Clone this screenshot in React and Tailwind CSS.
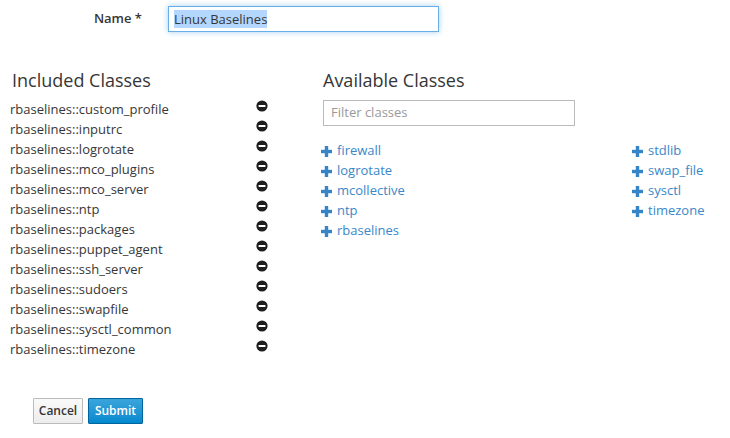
const included = [
  "custom_profile",
  "inputrc",
  "logrotate",
  "mco_plugins",
  "mco_server",
  "ntp",
  "packages",
  "puppet_agent",
  "ssh_server",
  "sudoers",
  "swapfile",
  "sysctl_common",
  "timezone",
];

const availableLeft = ["firewall", "logrotate", "mcollective", "ntp", "rbaselines"];
const availableRight = ["stdlib", "swap_file", "sysctl", "timezone"];

function MinusCircle() {
  return (
    <svg width="12" height="12" viewBox="0 0 12 12" className="mt-[-8px]">
      <circle cx="6" cy="6" r="5.6" fill="#1d1d1d" />
      <rect x="2.6" y="5" width="6.8" height="2" fill="#fff" />
    </svg>
  );
}

function Plus() {
  return (
    <svg width="11" height="11" viewBox="0 0 11 11">
      <rect x="3.8" y="0" width="3.4" height="11" fill="#3684c8" />
      <rect x="0" y="3.8" width="11" height="3.4" fill="#3684c8" />
    </svg>
  );
}

function ClassLink({ name }) {
  return (
    <div className="flex items-center h-5">
      <Plus />
      <span className="ml-[5px] text-[#3a87c9]">{name}</span>
    </div>
  );
}

export default function App() {
  return (
    <div
      className="w-[730px] h-[438px] bg-white text-[#363636] text-[13px] pl-[12px] overflow-hidden"
      style={{ fontFamily: '"Open Sans", sans-serif' }}
    >
      <div className="flex items-center pt-[6px]">
        <div className="w-[130px] text-right font-semibold">Name *</div>
        <div className="ml-[26px] w-[271px] h-[26px] border border-[#66afe9] shadow-[0_0_6px_rgba(102,175,233,0.6)] flex items-center px-[5px]">
          <span className="bg-[#b3d7fe] leading-[18px]">Linux Baselines</span>
        </div>
      </div>

      <div className="flex mt-[36px]">
        <div className="w-[311px]">
          <h2 className="text-[18px] leading-6">Included Classes</h2>
          <div className="mt-[8px] -ml-[2px]">
            {included.map((c) => (
              <div key={c} className="w-[258px] h-5 flex items-center justify-between">
                <span>rbaselines::{c}</span>
                <MinusCircle />
              </div>
            ))}
          </div>
          <div className="flex mt-[38px] ml-[21px] gap-[5px] text-[12px]">
            <button className="h-[26px] w-[50px] border border-[#bbb] rounded-[1px] bg-gradient-to-b from-[#fafafa] to-[#ededed] text-[#363636] font-semibold">
              Cancel
            </button>
            <button className="h-[26px] w-[55px] border border-[#00659c] rounded-[1px] bg-gradient-to-b from-[#39a5dc] to-[#0088ce] text-white font-semibold">
              Submit
            </button>
          </div>
        </div>

        <div className="flex-1">
          <h2 className="text-[18px] leading-6">Available Classes</h2>
          <div className="mt-[8px] w-[252px] h-[26px] border border-[#bbb] flex items-center px-[7px] text-[#999]">
            Filter classes
          </div>
          <div className="flex mt-[15px] -ml-[2px]">
            <div className="w-[311px]">
              {availableLeft.map((c) => (
                <ClassLink key={c} name={c} />
              ))}
            </div>
            <div>
              {availableRight.map((c) => (
                <ClassLink key={c} name={c} />
              ))}
            </div>
          </div>
        </div>
      </div>
    </div>
  );
}
